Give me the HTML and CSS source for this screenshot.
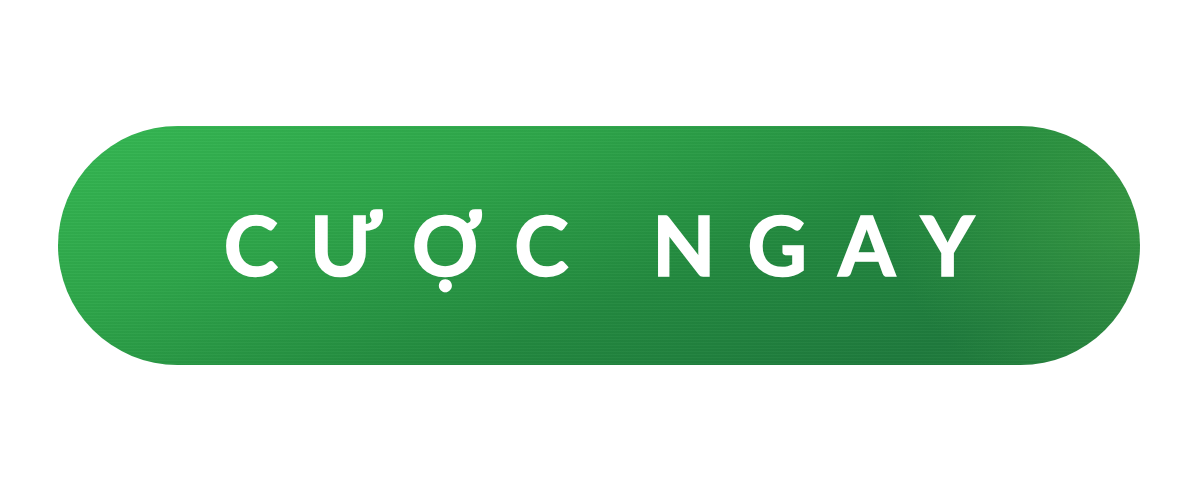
FILE: index.html
```html
<!DOCTYPE html>
<html lang="vi">
<head>
<meta charset="utf-8">
<title>Cược ngay</title>
<link rel="stylesheet" href="styles.css">
</head>
<body>
<main class="stage">
  <a class="cta" href="#">CƯỢC NGAY</a>
</main>
</body>
</html>
```
FILE: styles.css
```css
html, body {
  margin: 0;
  padding: 0;
  background: #ffffff;
}
.stage {
  width: 1200px;
  height: 489px;
  display: flex;
  align-items: flex-start;
  justify-content: flex-start;
  padding: 126px 0 0 58px;
  box-sizing: border-box;
}
.cta {
  width: 1082px;
  height: 239px;
  border-radius: 120px;
  display: flex;
  align-items: center;
  justify-content: center;
  text-decoration: none;
  color: #ffffff;
  font-family: "Lato", "Noto Sans", sans-serif;
  font-weight: 700;
  font-size: 82px;
  -webkit-text-stroke: 1.6px #ffffff;
  letter-spacing: 32px;
  padding-left: 32px;
  padding-bottom: 4px;
  box-sizing: border-box;
  background:
    repeating-linear-gradient(180deg, rgba(255,255,255,0.025) 0 1px, rgba(0,0,0,0.025) 1px 3px),
    radial-gradient(ellipse 260px 200px at 1090px 90px, rgba(70,170,70,0.55), rgba(70,170,70,0) 100%),
    linear-gradient(160deg, #35b853 0%, #2ea64a 30%, #23893f 60%, #1f7b3d 85%, #237f3c 100%);
}
```
